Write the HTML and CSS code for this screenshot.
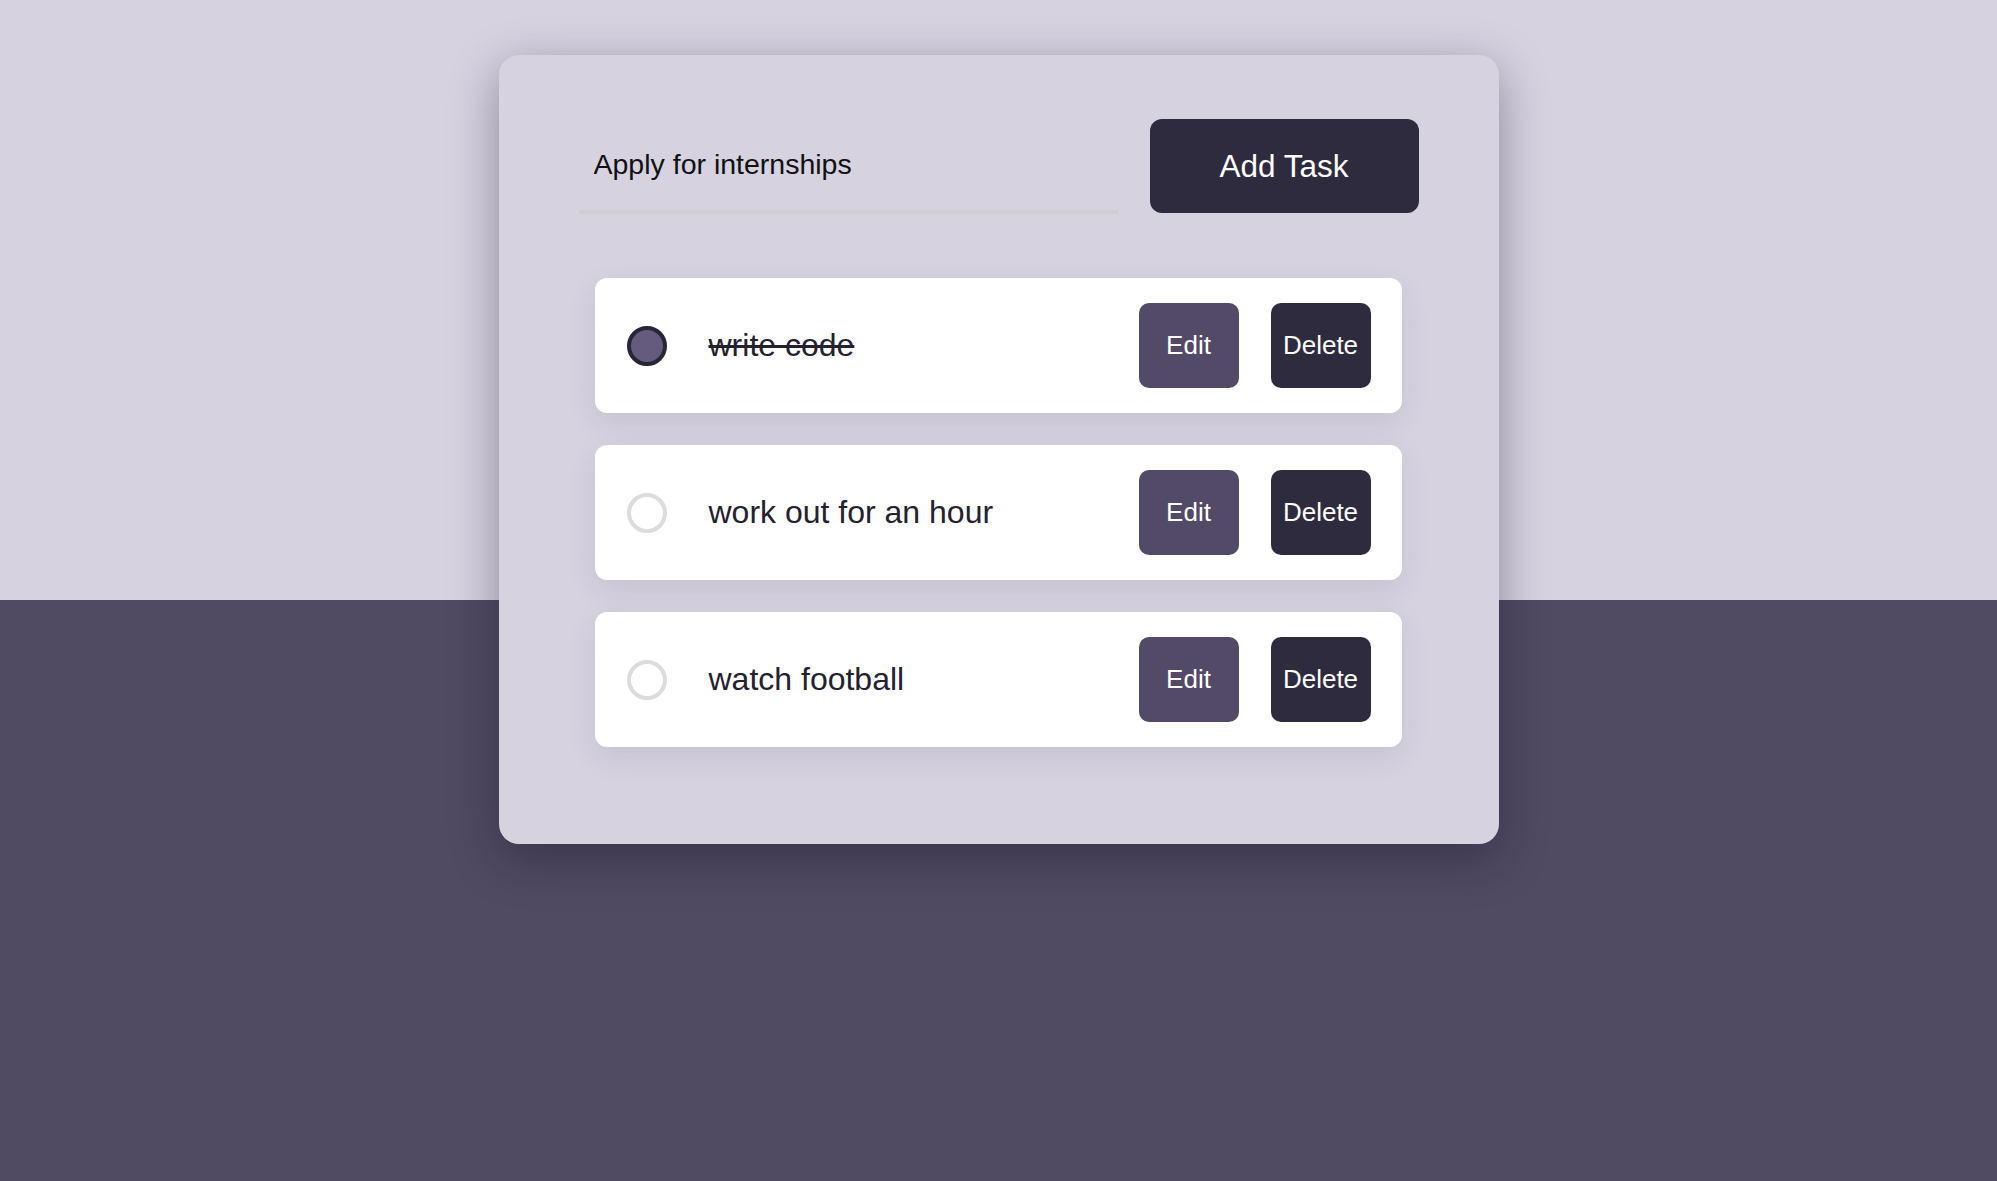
FILE: index.html
```html
<!DOCTYPE html>
<html lang="en">
<head>
    <meta charset="UTF-8">
    <meta name="viewport" content="width=device-width, initial-scale=1.0">
    <title>Todo List</title>
    <link rel="stylesheet" href="styles.css">
</head>
<body>
    <div class="container">
        <form class="todo-form">
            <input class="todo-input" type="text" value="Apply for internships">
            <button class="add-btn" type="button">Add Task</button>
        </form>
        <ul class="todo-list">
            <li class="todo-item">
                <input class="check" type="checkbox" checked>
                <span class="task done">write code</span>
                <button class="edit-btn" type="button">Edit</button>
                <button class="delete-btn" type="button">Delete</button>
            </li>
            <li class="todo-item">
                <input class="check" type="checkbox">
                <span class="task">work out for an hour</span>
                <button class="edit-btn" type="button">Edit</button>
                <button class="delete-btn" type="button">Delete</button>
            </li>
            <li class="todo-item">
                <input class="check" type="checkbox">
                <span class="task">watch football</span>
                <button class="edit-btn" type="button">Edit</button>
                <button class="delete-btn" type="button">Delete</button>
            </li>
        </ul>
    </div>
</body>
</html>
```

FILE: styles.css
```css
* {
    box-sizing: border-box;
}
body {
    margin: 0;
    min-height: 100vh;
    padding-top: 55px;
    font-family: 'Liberation Sans', Arial, Helvetica, sans-serif;
    background: linear-gradient(to bottom, #d6d2e0 600px, #504a63 600px);
}
.container {
    width: 1000px;
    margin: 0 auto;
    padding: 64px 80px 97px;
    background-color: #d6d2e0;
    border-radius: 20px;
    box-shadow: 0 14px 48px rgba(20, 15, 35, 0.38);
}
.todo-form {
    display: flex;
    gap: 31px;
    margin: 0;
}
.todo-input {
    flex: 1;
    height: 95px;
    padding: 0 15px;
    border: none;
    border-bottom: 4px solid #cfcfcf;
    background: transparent;
    font-family: inherit;
    font-size: 28.5px;
    color: #111;
    outline: none;
}
.add-btn {
    width: 269px;
    height: 94px;
    border: none;
    border-radius: 12px;
    background-color: #2f2b3e;
    color: #fff;
    font-family: inherit;
    font-size: 31.5px;
}
.todo-list {
    list-style: none;
    margin: 64px 0 0;
    padding: 0 17px 0 16px;
    display: flex;
    flex-direction: column;
    gap: 32px;
}
.todo-item {
    display: flex;
    align-items: center;
    height: 135px;
    padding: 0 31px 0 32px;
    background-color: #fff;
    border-radius: 12px;
    box-shadow: 0 10px 30px rgba(40, 30, 70, 0.09);
}
.check {
    appearance: none;
    -webkit-appearance: none;
    width: 40px;
    height: 40px;
    margin: 0;
    flex-shrink: 0;
    border: 4px solid #dcdcdc;
    border-radius: 50%;
    background: #fff;
}
.check:checked {
    background-color: #655b7e;
    border-color: #2a2536;
}
.task {
    flex: 1;
    margin-left: 42px;
    font-size: 32px;
    color: #25212f;
}
.task.done {
    text-decoration: line-through;
}
.edit-btn,
.delete-btn {
    width: 100px;
    height: 85px;
    border: none;
    border-radius: 10px;
    color: #fff;
    font-family: inherit;
    font-size: 26px;
}
.edit-btn {
    margin-left: 8px;
    background-color: #524a66;
}
.delete-btn {
    margin-left: 32px;
    background-color: #2f2b3e;
}
```
